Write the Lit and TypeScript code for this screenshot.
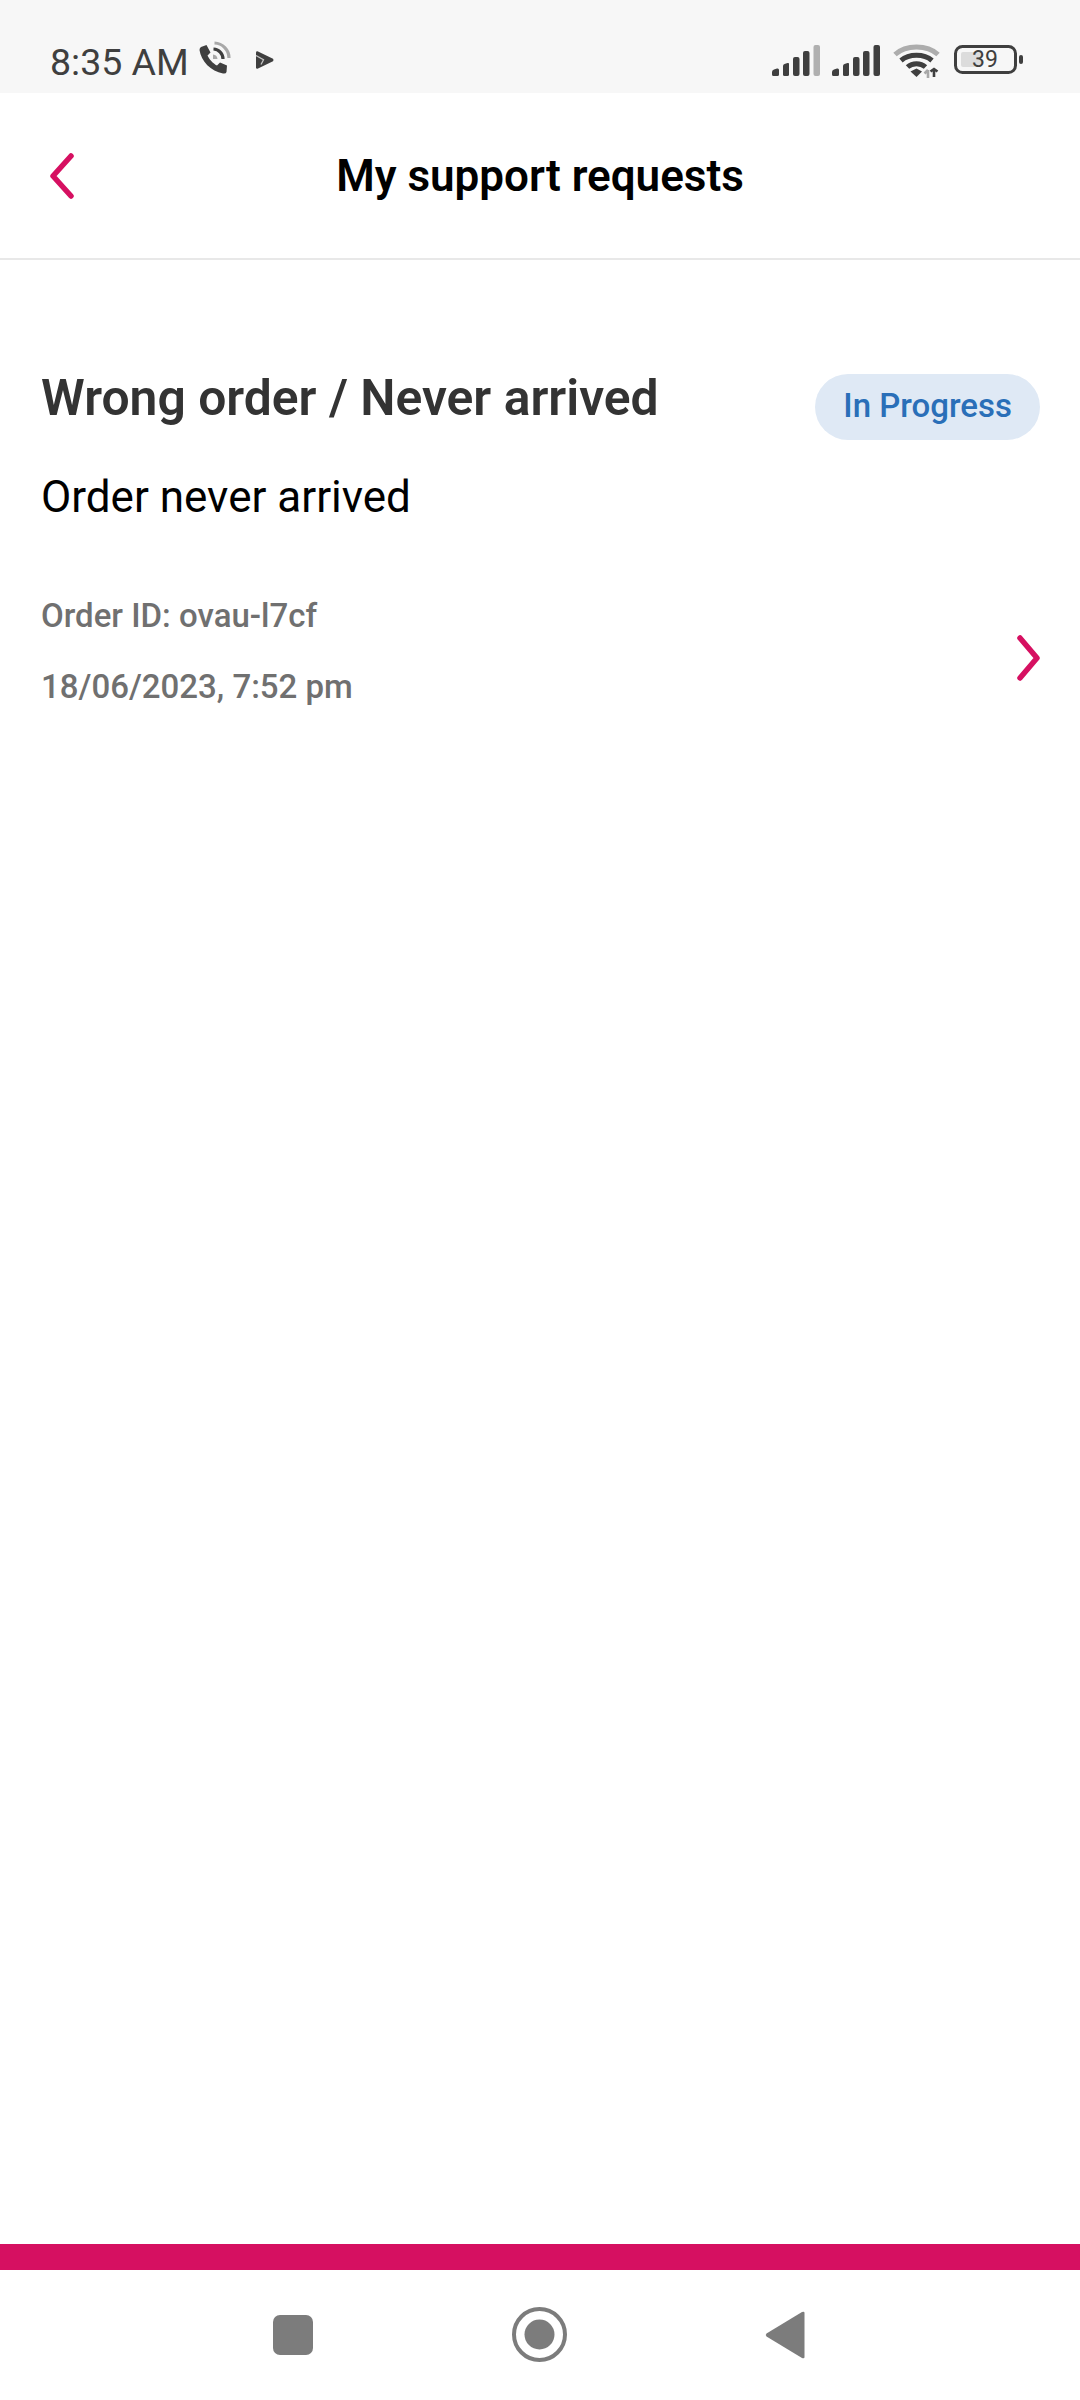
import { LitElement, html, css, svg } from "lit";
import { customElement } from "lit/decorators.js";

const signal = (lastColor: string) => svg`
  <path d="M0 27 Q0 25 2 24.5 L5 23.5 Q7 23 7 25 V29.5 Q7 31 5.5 31 H1.5 Q0 31 0 29.5 Z" fill="#3f3f3f"/>
  <path d="M11 21 Q11 19.5 12.5 19 L15.5 18 Q17 17.5 17 19 V29.5 Q17 31 15.5 31 H12.5 Q11 31 11 29.5 Z" fill="#3f3f3f"/>
  <rect x="21" y="12" width="6.5" height="19" rx="2" fill="#3f3f3f"/>
  <rect x="31" y="6" width="6.5" height="25" rx="2" fill="#3f3f3f"/>
  <rect x="41.5" y="0" width="6.5" height="31" rx="2" fill="${lastColor}"/>`;

@customElement("app-root")
export class AppRoot extends LitElement {
  static styles = css`
    :host { display: block; width: 1080px; height: 2400px; background: #fff; font-family: Roboto, "Noto Sans", sans-serif; }
    .page { display: flex; flex-direction: column; height: 2400px; }
    svg { display: block; flex: none; }
    .status { height: 93px; flex: none; background: #f7f7f7; display: flex; align-items: flex-start; box-sizing: border-box; padding: 0 57px 0 50px; color: #3f3f3f; }
    .time { font-size: 37.5px; line-height: 42px; margin-top: 41px; }
    .phone { margin: 41px 0 0 9px; }
    .play { margin: 51px 0 0 25px; }
    .spacer { flex: 1; }
    .sig { margin-top: 45px; }
    .sig2 { margin: 45px 0 0 12px; }
    .wifi { margin: 43px 0 0 13px; }
    .batt { margin: 45px 0 0 14px; width: 69px; height: 30px; position: relative; }
    .batt-text { position: absolute; left: 0; top: 0; width: 62px; height: 30px; text-align: center; font-size: 23px; line-height: 30px; color: #3f3f3f; }
    .header { height: 167px; flex: none; box-sizing: border-box; border-bottom: 2px solid #e8e8e8; display: flex; align-items: center; position: relative; padding-left: 50px; }
    .title { position: absolute; left: 0; right: 0; top: 0; bottom: 0; display: flex; align-items: center; justify-content: center; font-size: 44px; font-weight: 600; color: #000; }
    main { flex: 1; padding: 110px 40px 0 41px; min-height: 0; }
    .top { display: flex; justify-content: space-between; align-items: flex-start; }
    h1 { margin: 0; font-size: 49.8px; line-height: 56px; font-weight: 600; color: #333; }
    .pill { height: 66px; margin-top: 4px; padding: 0 28px; border-radius: 33px; background: #dfe9f5; color: #2a6fb8; font-size: 33px; font-weight: 500; line-height: 64px; }
    .sub { font-size: 44px; line-height: 50px; color: #000; margin-top: 32px; }
    .row { display: flex; justify-content: space-between; align-items: center; margin-top: 75px; }
    .row svg { margin-top: 13px; }
    .meta { font-size: 33px; line-height: 38px; font-weight: 500; color: #707070; display: flex; flex-direction: column; gap: 33px; }
    .bar { height: 26px; flex: none; background: #d61061; }
    .nav { height: 130px; flex: none; background: #fff; display: flex; align-items: flex-start; padding-left: 273px; }
    .n1 { margin-top: 45px; }
    .n2 { margin: 37px 0 0 199px; }
    .n3 { margin: 41px 0 0 198px; }
  `;

  render() {
    return html`<div class="page">
      <div class="status">
        <span class="time">8:35 AM</span>
        <svg class="phone" width="33" height="33" viewBox="0 0 33 33">
          <path d="M3 6 L8.5 4 L12.5 11.5 L9.5 14.5 C11 18 15 22.5 19 24.5 L22 21.5 L29 24.5 L28.5 31 Q28 33 25 32.5 C13 30.5 3 20 1.5 9 Q1.5 7 3 6 Z" fill="#3f3f3f"/>
          <path d="M16.5 2 A 15 15 0 0 1 31 17" fill="none" stroke="#a8a8a8" stroke-width="3.2"/>
          <path d="M15.5 8 A 10 10 0 0 1 25 18" fill="none" stroke="#3f3f3f" stroke-width="3.2"/>
          <path d="M15 13.5 A 5 5 0 0 1 19.5 18 L15 18 Z" fill="#a8a8a8"/>
        </svg>
        <svg class="play" width="18" height="18" viewBox="0 0 18 18">
          <path d="M1.5 0.2 L17 7.8 Q18 9 17 10.2 L1.5 17.8 Q0 18 0 16.5 V1.5 Q0 0 1.5 0.2 Z" fill="#3f3f3f"/>
          <path d="M0 4.5 L7.5 8.8 L5 13.5" fill="none" stroke="#c4c4c4" stroke-width="1.3"/>
        </svg>
        <div class="spacer"></div>
        <svg class="sig" width="48" height="31" viewBox="0 0 48 31">${signal("#b0b0b0")}</svg>
        <svg class="sig2" width="48" height="31" viewBox="0 0 48 31">${signal("#3f3f3f")}</svg>
        <svg class="wifi" width="47" height="35" viewBox="0 0 47 35">
          <path d="M2 11.5 C13 1.5 34 1.5 45 11.5" fill="none" stroke="#adadad" stroke-width="5"/>
          <path d="M8 17.5 C16 10.5 31 10.5 39 17.5" fill="none" stroke="#3f3f3f" stroke-width="5"/>
          <path d="M14.5 24 C19.5 19.5 27.5 19.5 32.5 24" fill="none" stroke="#3f3f3f" stroke-width="5"/>
          <path d="M17.5 28.5 L23.5 25.5 L29 28.5 L23.5 34 Z" fill="#3f3f3f"/>
          <path d="M35 27 V35 M31.5 30.5 L35 27" stroke="#a8a8a8" stroke-width="2.6" fill="none"/>
          <path d="M41 26 V34 M37.5 28.5 L41 26 L44.5 28.5" stroke="#3f3f3f" stroke-width="2.6" fill="none"/>
        </svg>
        <div class="batt">
          <svg width="69" height="30" viewBox="0 0 69 30">
            <rect x="1.5" y="1.5" width="60" height="26" rx="7" fill="none" stroke="#3f3f3f" stroke-width="3"/>
            <rect x="7" y="7" width="21" height="15" rx="2" fill="#dcdcdc"/>
            <rect x="65" y="10" width="4" height="9" rx="2" fill="#3f3f3f"/>
          </svg>
          <span class="batt-text">39</span>
        </div>
      </div>
      <div class="header">
        <svg width="24" height="46" viewBox="0 0 24 46">
          <path d="M21 3 L3 23 L21 43" fill="none" stroke="#d61061" stroke-width="5.5" stroke-linecap="round" stroke-linejoin="round"/>
        </svg>
        <div class="title">My support requests</div>
      </div>
      <main>
        <div class="top">
          <h1>Wrong order / Never arrived</h1>
          <span class="pill">In Progress</span>
        </div>
        <div class="sub">Order never arrived</div>
        <div class="row">
          <div class="meta"><span>Order ID: ovau-l7cf</span><span>18/06/2023, 7:52 pm</span></div>
          <svg width="24" height="46" viewBox="0 0 24 46">
            <path d="M4 3 L21 23 L4 43" fill="none" stroke="#d61061" stroke-width="5.5" stroke-linecap="round" stroke-linejoin="round"/>
          </svg>
        </div>
      </main>
      <div class="bar"></div>
      <div class="nav">
        <svg class="n1" width="40" height="40" viewBox="0 0 40 40"><rect width="40" height="40" rx="7" fill="#7c7c7c"/></svg>
        <svg class="n2" width="55" height="55" viewBox="0 0 55 55">
          <circle cx="27.5" cy="27.5" r="25.5" fill="none" stroke="#7c7c7c" stroke-width="4"/>
          <circle cx="27.5" cy="27.5" r="15" fill="#7c7c7c"/>
        </svg>
        <svg class="n3" width="40" height="48" viewBox="0 0 40 48">
          <path d="M37 1 L1.5 22.5 Q0 24 1.5 25.5 L37 47 Q39.5 48 39.5 46 V2 Q39.5 0 37 1 Z" fill="#7c7c7c"/>
        </svg>
      </div>
    </div>`;
  }
}
